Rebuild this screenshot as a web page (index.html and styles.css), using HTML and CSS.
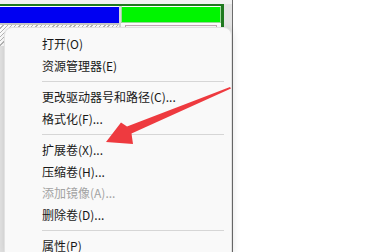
FILE: index.html
```html
<!DOCTYPE html>
<html lang="zh-CN">
<head>
<meta charset="utf-8">
<link rel="stylesheet" href="styles.css">
</head>
<body>
<div class="page">
  <div class="disk">
    <div class="top-strip"></div>
    <div class="ext-line"></div>
    <div class="parts">
      <div class="part part-primary">
        <div class="head head-blue"></div>
        <div class="body body-hatched"></div>
      </div>
      <div class="part-gap"></div>
      <div class="part part-free">
        <div class="head head-green"></div>
        <div class="body body-plain"><div class="inner-box"></div></div>
      </div>
      <div class="ext-right"></div>
    </div>
  </div>
  <div class="rest"></div>
</div>

<div class="menu">
  <div class="item">打开(O)</div>
  <div class="item">资源管理器(E)</div>
  <div class="sep"></div>
  <div class="item">更改驱动器号和路径(C)...</div>
  <div class="item">格式化(F)...</div>
  <div class="sep"></div>
  <div class="item">扩展卷(X)...</div>
  <div class="item">压缩卷(H)...</div>
  <div class="item disabled">添加镜像(A)...</div>
  <div class="item">删除卷(D)...</div>
  <div class="sep"></div>
  <div class="item">属性(P)</div>
</div>

<svg class="arrow" viewBox="0 0 384 252" width="384" height="252">
  <polygon points="230,87 127,126.5 121,122.5 106,142 133,144 131.5,133.5 231,88.4" fill="#ee3a3f"/>
</svg>
</body>
</html>
```
FILE: styles.css
```css
html, body {
  margin: 0;
  padding: 0;
  background: #ffffff;
  width: 384px;
  height: 252px;
  overflow: hidden;
}

.page {
  display: flex;
  height: 252px;
}

.disk {
  width: 232px;
  height: 252px;
  background: #e4e4e4;
  border-right: 1px solid #6c6c6c;
  display: flex;
  flex-direction: column;
}

.rest {
  flex: 1;
  background: #ffffff;
}

.top-strip {
  height: 4px;
  background: #f2f2f2;
}

.ext-line {
  height: 2px;
  width: 224px;
  background: #1f7a1f;
}

.parts {
  display: flex;
  height: 40px;
}

.part {
  display: flex;
  flex-direction: column;
}

.part-primary {
  width: 119px;
}

.part-gap {
  width: 2px;
  background: #d8d8d8;
}

.part-free {
  width: 100px;
  background: #ffffff;
}

.ext-right {
  width: 3px;
  background: #1f7a1f;
}

.head {
  height: 17px;
  border-top: 1px solid #ffffff;
}

.head-blue {
  background: #0000f2;
  height: 16px;
}

.head-green {
  background: #00f500;
  height: 15px;
  border: 1px solid #9cd89c;
  border-top: 1px solid #ffffff;
}

.body-hatched {
  flex: 1;
  border-top: 2px solid #c8c8c8;
  background: repeating-linear-gradient(135deg, #ffffff 0 2px, #b8b8b8 2px 3px);
}

.body-plain {
  flex: 1;
  background: #ffffff;
  padding: 2px 4px 0 4px;
}

.inner-box {
  height: 20px;
  border: 1px solid #c8a8b8;
  border-bottom: none;
}

.menu {
  position: absolute;
  left: 4px;
  top: 27px;
  bottom: 0;
  width: 226px;
  background: #f9f9f9;
  border: 1px solid #e2e2e2;
  border-bottom: none;
  border-radius: 8px 8px 0 0;
  box-shadow: 0 2px 8px rgba(0, 0, 0, 0.14);
  padding-top: 5px;
  overflow: hidden;
  font-family: "Noto Sans CJK SC", "Noto Sans", sans-serif;
  font-size: 12px;
  color: #181818;
}

.item {
  height: 21.7px;
  line-height: 21.7px;
  padding-left: 37px;
  white-space: nowrap;
}

.item.disabled {
  color: #a3a3a3;
}

.sep {
  height: 1px;
  margin: 4.3px 7px 4.3px 37px;
  background: #d6d6d6;
}

.arrow {
  position: absolute;
  left: 0;
  top: 0;
  pointer-events: none;
}
```
